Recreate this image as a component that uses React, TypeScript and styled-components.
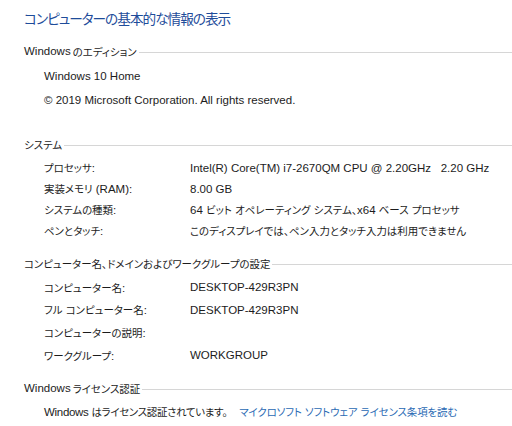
import styled, { createGlobalStyle } from "styled-components";

const GlobalStyle = createGlobalStyle`
  html, body {
    margin: 0;
    padding: 0;
    background: #ffffff;
  }
  body {
    font-family: "Segoe UI", "Liberation Sans", "Noto Sans CJK JP", sans-serif;
    font-feature-settings: "palt";
    color: #1c1c1c;
  }
`;

const Page = styled.div`
  width: 512px;
  height: 426px;
  overflow: hidden;
  padding: 9px 0 0 24px;
  box-sizing: border-box;
`;

const Title = styled.h1`
  margin: 0;
  font-size: 15px;
  font-weight: normal;
  line-height: 20px;
  color: #1e4c9a;
  letter-spacing: -1px;
`;

// Japanese runs are set a touch smaller, like the narrow UI font of the original
const Ja = styled.span`
  font-size: 0.91em;
`;

const Section = styled.section<{ top: number }>`
  margin-top: ${(p) => p.top}px;
`;

const Header = styled.div`
  display: flex;
  align-items: center;
  gap: 2px;
  height: 18px;
  font-size: 11.5px;
  white-space: nowrap;
`;

const Rule = styled.div`
  flex: 1;
  height: 1px;
  background: #d6d6d6;
  margin-top: 2px;
`;

const Body = styled.div<{ rowH: number }>`
  padding-left: 20px;
  display: grid;
  grid-template-columns: 146px 1fr;
  grid-auto-rows: ${(p) => p.rowH}px;
  align-items: center;
  font-size: 11.5px;
  margin-top: 4px;
`;

const Full = styled.div`
  grid-column: 1 / span 2;
  white-space: nowrap;
`;

const Label = styled.div`
  white-space: nowrap;
`;

const Value = styled.div`
  white-space: pre;
`;

const Status = styled.span`
  letter-spacing: -0.3px;
`;

const Link = styled.a`
  color: #2a6ab4;
  text-decoration: none;
  margin-left: 12px;
  letter-spacing: -0.1px;
`;

const CJK = /([\u3000-\u30ff\u4e00-\u9fff\uff00-\uffef]+)/;

const T = ({ children }: { children: string }) => (
  <>
    {children.split(CJK).map((part, i) =>
      i % 2 === 1 ? <Ja key={i}>{part}</Ja> : part
    )}
  </>
);

const Row = ({ label, value }: { label: string; value: string }) => (
  <>
    <Label>
      <T>{label}</T>
    </Label>
    <Value>
      <T>{value}</T>
    </Value>
  </>
);

export default function App() {
  return (
    <Page>
      <GlobalStyle />
      <Title>
        <T>コンピューターの基本的な情報の表示</T>
      </Title>

      <Section top={12}>
        <Header>
          <T>Windows のエディション</T>
          <Rule />
        </Header>
        <Body rowH={24}>
          <Full>Windows 10 Home</Full>
          <Full>© 2019 Microsoft Corporation. All rights reserved.</Full>
        </Body>
      </Section>

      <Section top={23}>
        <Header>
          <T>システム</T>
          <Rule />
        </Header>
        <Body rowH={21}>
          <Row label="プロセッサ:" value="Intel(R) Core(TM) i7-2670QM CPU @ 2.20GHz   2.20 GHz" />
          <Row label="実装メモリ (RAM):" value="8.00 GB" />
          <Row label="システムの種類:" value="64 ビット オペレーティング システム、x64 ベース プロセッサ" />
          <Row label="ペンとタッチ:" value="このディスプレイでは、ペン入力とタッチ入力は利用できません" />
        </Body>
      </Section>

      <Section top={13}>
        <Header>
          <T>コンピューター名、ドメインおよびワークグループの設定</T>
          <Rule />
        </Header>
        <Body rowH={22.6}>
          <Row label="コンピューター名:" value="DESKTOP-429R3PN" />
          <Row label="フル コンピューター名:" value="DESKTOP-429R3PN" />
          <Row label="コンピューターの説明:" value="" />
          <Row label="ワークグループ:" value="WORKGROUP" />
        </Body>
      </Section>

      <Section top={13}>
        <Header>
          <T>Windows ライセンス認証</T>
          <Rule />
        </Header>
        <Body rowH={21}>
          <Full>
            <Status>
              <T>Windows はライセンス認証されています。</T>
            </Status>
            <Link href="#">
              <T>マイクロソフト ソフトウェア ライセンス条項を読む</T>
            </Link>
          </Full>
        </Body>
      </Section>
    </Page>
  );
}
